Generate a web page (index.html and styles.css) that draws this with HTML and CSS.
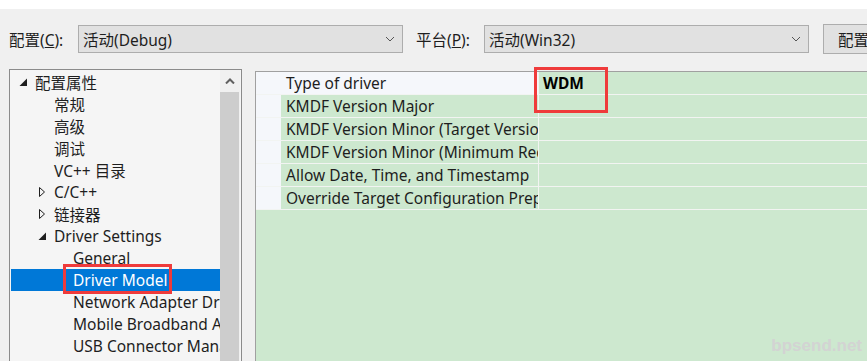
FILE: index.html
```html
<!DOCTYPE html>
<html lang="zh-CN">
<head>
  <meta charset="UTF-8" />
  <title>属性页</title>
  <link rel="stylesheet" href="styles.css">
</head>
<body>

  <div class="top-strip"></div>

  <div class="toolbar">
    <label class="field-label">配置(<u>C</u>):</label>
    <div class="combo">
      <span>活动(Debug)</span>
      <svg class="chev" width="10" height="6" viewBox="0 0 10 6"><path d="M1 1 L5 5 L9 1" fill="none" stroke="#555" stroke-width="1"/></svg>
    </div>
    <label class="field-label second">平台(<u>P</u>):</label>
    <div class="combo">
      <span>活动(Win32)</span>
      <svg class="chev" width="10" height="6" viewBox="0 0 10 6"><path d="M1 1 L5 5 L9 1" fill="none" stroke="#555" stroke-width="1"/></svg>
    </div>
    <button class="cfg-btn">配置管理器(<u>O</u>)...</button>
  </div>

  <div class="main">
    <!-- left tree -->
    <div class="tree">
      <div class="tree-list">
        <div class="node lv0"><svg class="exp" width="16" height="10" viewBox="0 0 16 10"><path d="M0.5 9 L8 9 L8 1.5 Z" fill="#1e1e1e"/></svg>配置属性</div>
        <div class="node lv1"><span class="exp"></span>常规</div>
        <div class="node lv1"><span class="exp"></span>高级</div>
        <div class="node lv1"><span class="exp"></span>调试</div>
        <div class="node lv1"><span class="exp"></span>VC++ 目录</div>
        <div class="node lv1"><svg class="exp" width="16" height="10" viewBox="0 0 16 10"><path d="M1.5 0.5 L6.5 5 L1.5 9.5 Z" fill="none" stroke="#1e1e1e" stroke-width="1"/></svg>C/C++</div>
        <div class="node lv1"><svg class="exp" width="16" height="10" viewBox="0 0 16 10"><path d="M1.5 0.5 L6.5 5 L1.5 9.5 Z" fill="none" stroke="#1e1e1e" stroke-width="1"/></svg>链接器</div>
        <div class="node lv1"><svg class="exp" width="16" height="10" viewBox="0 0 16 10"><path d="M0.5 9 L8 9 L8 1.5 Z" fill="#1e1e1e"/></svg>Driver Settings</div>
        <div class="node lv2"><span class="exp"></span>General</div>
        <div class="node lv2 selected"><span class="exp"></span><span class="mark">Driver Model</span></div>
        <div class="node lv2"><span class="exp"></span>Network Adapter Driver</div>
        <div class="node lv2"><span class="exp"></span>Mobile Broadband Adapter</div>
        <div class="node lv2"><span class="exp"></span>USB Connector Manager</div>
      </div>
      <div class="scrollbar">
        <div class="sb-arrow">
          <svg width="10" height="6" viewBox="0 0 10 6"><path d="M1 5.5 L5 1.5 L9 5.5" fill="none" stroke="#606060" stroke-width="2"/></svg>
        </div>
        <div class="sb-thumb"></div>
      </div>
    </div>

    <!-- property grid -->
    <div class="grid">
      <div class="prop first">
        <div class="indent"></div>
        <div class="name">Type of driver</div>
        <div class="value"><span class="mark box-wdm">WDM</span></div>
      </div>
      <div class="prop">
        <div class="indent"></div>
        <div class="name">KMDF Version Major</div>
        <div class="value"></div>
      </div>
      <div class="prop">
        <div class="indent"></div>
        <div class="name">KMDF Version Minor (Target Version)</div>
        <div class="value"></div>
      </div>
      <div class="prop">
        <div class="indent"></div>
        <div class="name">KMDF Version Minor (Minimum Required)</div>
        <div class="value"></div>
      </div>
      <div class="prop">
        <div class="indent"></div>
        <div class="name">Allow Date, Time, and Timestamp</div>
        <div class="value"></div>
      </div>
      <div class="prop">
        <div class="indent"></div>
        <div class="name">Override Target Configuration Preprocessor</div>
        <div class="value"></div>
      </div>
      <div class="watermark">bpsend.net</div>
    </div>
  </div>

</body>
</html>
```

FILE: styles.css
```css
*,
*::before,
*::after {
  box-sizing: border-box;
}

body {
  margin: 0;
  width: 867px;
  height: 361px;
  overflow: hidden;
  background: #f0f0f0;
  font-family: 'Noto Sans', 'Noto Sans CJK SC', sans-serif;
  font-size: 15.5px;
  color: #1e1e1e;
}

.top-strip {
  height: 9px;
  background: #fff;
}

/* toolbar with the two combos */
.toolbar {
  display: flex;
  align-items: center;
  height: 60px;
  padding-left: 9px;
  white-space: nowrap;
  overflow: hidden;
}

.toolbar > * {
  flex-shrink: 0;
}

.field-label {
  width: 69px;
}

.field-label.second {
  width: 68px;
  margin-left: 13px;
}

.combo {
  display: flex;
  align-items: center;
  justify-content: space-between;
  width: 325px;
  height: 28px;
  padding: 0 7px 0 4px;
  background: #e1e1e1;
  border: 1px solid #adadad;
}

.cfg-btn {
  height: 30px;
  margin-left: 14px;
  padding: 0 14px;
  background: #e1e1e1;
  border: 1px solid #adadad;
  font: inherit;
  color: #1e1e1e;
  white-space: nowrap;
}

.main {
  display: flex;
  gap: 13px;
  padding-left: 9px;
}

/* tree */
.tree {
  display: flex;
  width: 233px;
  height: 292px;
  flex-shrink: 0;
  background: #f5f5f5;
  border: 1px solid #8b8b8b;
  border-bottom: none;
}

.tree-list {
  width: 210px;
  padding-top: 1px;
  overflow: hidden;
}

.node {
  display: flex;
  align-items: center;
  height: 22px;
  white-space: nowrap;
}

.node.lv0 { padding-left: 9px; }
.node.lv1 { padding-left: 28px; }
.node.lv2 { padding-left: 47px; }

.exp {
  flex: 0 0 16px;
  width: 16px;
}

.node.selected {
  margin-left: 1px;
  padding-left: 46px;
  background: #0078d7;
  color: #fff;
}

.scrollbar {
  width: 20px;
  background: #f0f0f0;
  display: flex;
  flex-direction: column;
}

.sb-arrow {
  height: 22px;
  display: flex;
  align-items: center;
  justify-content: center;
}

.sb-thumb {
  flex: 1;
  width: 19px;
  background: #cdcdcd;
}

/* annotation boxes */
.mark {
  position: relative;
}

.mark::after {
  content: "";
  position: absolute;
  border: 3px solid #ef3b3b;
}

.node .mark::after {
  left: -10px;
  top: -5px;
  width: 109px;
  height: 30px;
}

.box-wdm::after {
  left: -9px;
  top: -5px;
  width: 74px;
  height: 46px;
}

/* property grid */
.grid {
  position: relative;
  flex: 1;
  height: 290px;
  margin-top: 2px;
  background: #cde8cf;
  border-top: 1px solid #a0a0a0;
  border-left: 1px solid #a0a0a0;
}

.prop {
  display: flex;
  height: 23px;
  border-bottom: 1px solid #f2f4f2;
}

.prop .indent {
  width: 25px;
  background: #f5f7fb;
}

.prop .name {
  width: 258px;
  padding-left: 5px;
  line-height: 22px;
  white-space: nowrap;
  overflow: hidden;
  border-right: 1px solid #f2f4f2;
}

.prop.first .name {
  background: #f5f7fb;
}

.prop .value {
  flex: 1;
  padding-left: 4px;
  line-height: 22px;
  font-weight: bold;
  color: #000;
}

.watermark {
  position: absolute;
  right: 5px;
  bottom: 5px;
  font-family: 'Liberation Sans', sans-serif;
  font-weight: bold;
  font-size: 17px;
  color: #d3d3d3;
}
```
